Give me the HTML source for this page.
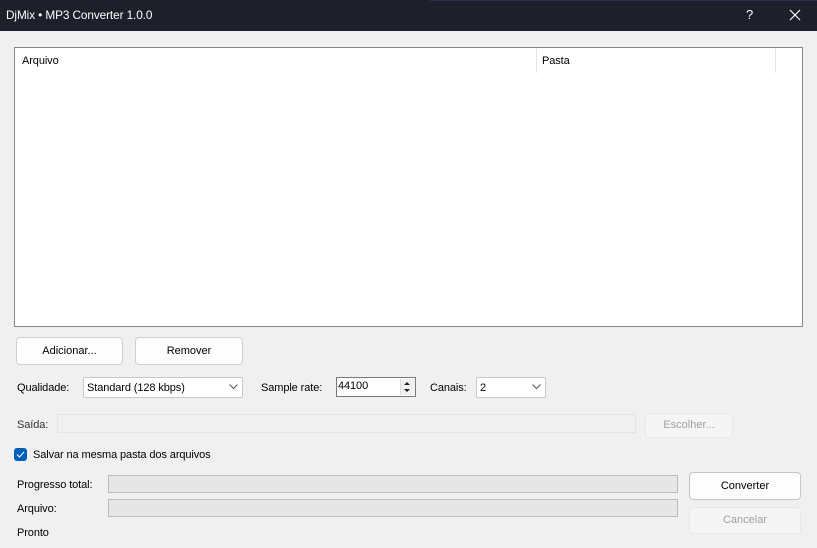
<!DOCTYPE html>
<html><head><meta charset="utf-8"><style>
body{margin:0;width:817px;height:548px;background:#f0f0f0;font-family:"Liberation Sans",sans-serif;font-size:11px;color:#000;position:relative;overflow:hidden}
.a{position:absolute}
.t{position:absolute;line-height:14px;white-space:nowrap;letter-spacing:-0.1px}
.btn{position:absolute;background:#fdfdfd;border:1px solid #d0d0d0;border-radius:4px;box-sizing:border-box;text-align:center;font-size:11px}
.dis{background:#f5f5f5;border-color:#e6e6e6;color:#a0a0a0}
.bar{position:absolute;background:#e6e6e6;border:1px solid #bcbcbc;box-sizing:border-box}
.combo{position:absolute;background:#fff;border:1px solid #c8c8c8;box-sizing:border-box;border-radius:2px}
</style></head><body>
<div class="a" style="left:0;top:0;width:817px;height:31px;background:#1d1f2b"></div>
<div class="a" style="left:430px;top:0;width:387px;height:1px;background:#2d2c4f"></div>
<div class="t" style="left:6px;top:8px;color:#fff;font-size:11.8px">DjMix • MP3 Converter 1.0.0</div>
<div class="t" style="left:746px;top:8px;color:#fff;font-size:13px">?</div>
<svg class="a" style="left:789px;top:9px" width="12" height="12"><path d="M1 1L11 11M11 1L1 11" stroke="#fff" stroke-width="1.2"/></svg>

<div class="a" style="left:14px;top:47px;width:789px;height:280px;background:#fff;border:1px solid #828790;box-sizing:border-box"></div>
<div class="a" style="left:536px;top:48px;width:1px;height:25px;background:#e5e5e5"></div>
<div class="a" style="left:775px;top:48px;width:1px;height:25px;background:#e5e5e5"></div>
<div class="t" style="left:22px;top:54px">Arquivo</div>
<div class="t" style="left:542px;top:54px">Pasta</div>

<div class="btn" style="left:16px;top:337px;width:107px;height:28px;line-height:26px">Adicionar...</div>
<div class="btn" style="left:135px;top:337px;width:108px;height:28px;line-height:26px">Remover</div>

<div class="t" style="left:17px;top:381px">Qualidade:</div>
<div class="combo" style="left:83px;top:377px;width:160px;height:21px"></div>
<div class="t" style="left:87px;top:381px">Standard (128 kbps)</div>
<svg class="a" style="left:229px;top:384px" width="9" height="6"><path d="M0.5 0.5L4.5 4.5L8.5 0.5" stroke="#555" fill="none"/></svg>
<div class="t" style="left:261px;top:381px">Sample rate:</div>
<div class="a" style="left:336px;top:377px;width:80px;height:20px;background:#fff;border:1px solid #7a7a7a;box-sizing:border-box"></div>
<div class="t" style="left:338px;top:379px">44100</div>
<div class="a" style="left:400px;top:379px;width:14px;height:16px;background:#f0f0f0;border-left:1px solid #ddd"></div>
<svg class="a" style="left:403px;top:380px" width="8" height="14"><path d="M1 5L4 2L7 5Z M1 9L4 12L7 9Z" fill="#222"/></svg>
<div class="t" style="left:430px;top:381px">Canais:</div>
<div class="combo" style="left:476px;top:377px;width:70px;height:21px"></div>
<div class="t" style="left:480px;top:381px">2</div>
<svg class="a" style="left:532px;top:384px" width="9" height="6"><path d="M0.5 0.5L4.5 4.5L8.5 0.5" stroke="#555" fill="none"/></svg>

<div class="t" style="left:17px;top:418px;color:#333">Saída:</div>
<div class="a" style="left:57px;top:414px;width:579px;height:19px;border:1px solid #e4e4e4;box-sizing:border-box;background:#f0f0f0"></div>
<div class="btn dis" style="left:645px;top:413px;width:88px;height:25px;line-height:23px">Escolher...</div>

<div class="a" style="left:14px;top:448px;width:13px;height:13px;background:#005fb8;border-radius:3px"></div>
<svg class="a" style="left:16px;top:451px" width="9" height="7"><path d="M1 3.5L3.5 6L8 1" stroke="#fff" stroke-width="1" fill="none"/></svg>
<div class="t" style="left:33px;top:448px">Salvar na mesma pasta dos arquivos</div>

<div class="t" style="left:17px;top:478px">Progresso total:</div>
<div class="bar" style="left:108px;top:475px;width:570px;height:18px"></div>
<div class="t" style="left:17px;top:502px">Arquivo:</div>
<div class="bar" style="left:108px;top:499px;width:570px;height:18px"></div>
<div class="t" style="left:17px;top:526px">Pronto</div>

<div class="btn" style="left:689px;top:472px;width:112px;height:28px;line-height:26px;border-color:#c4c4c4">Converter</div>
<div class="btn dis" style="left:689px;top:507px;width:112px;height:27px;line-height:25px">Cancelar</div>
</body></html>
